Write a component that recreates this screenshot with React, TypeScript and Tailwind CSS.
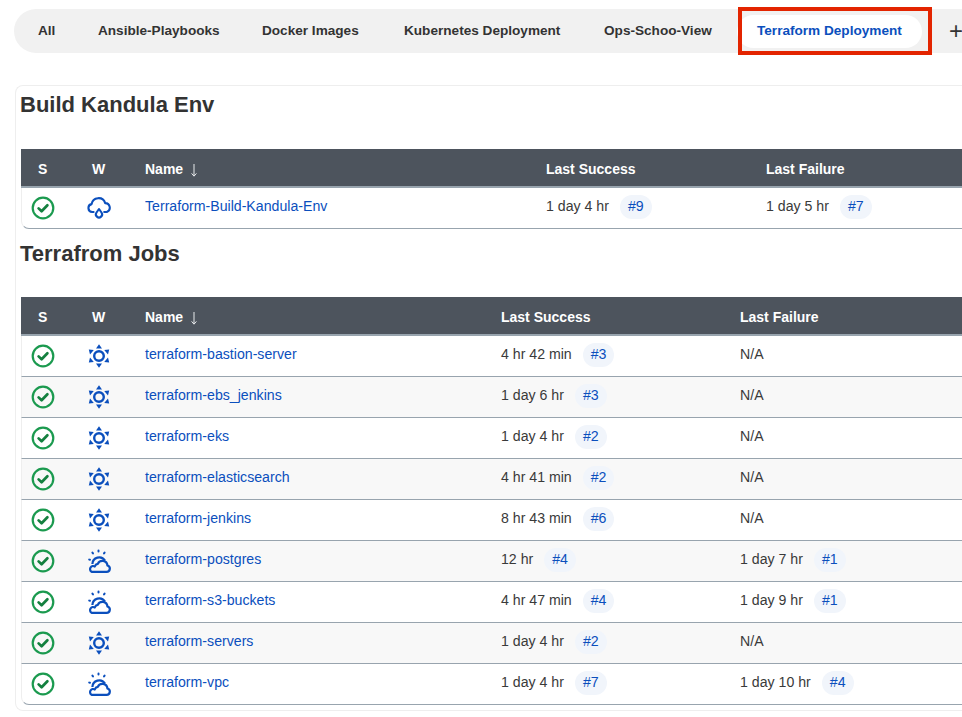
import React from "react";

const Check = () => (
  <svg width="24" height="24" viewBox="0 0 24 24" fill="none" className="block">
    <circle cx="12" cy="12" r="10.3" stroke="#1b9a4f" strokeWidth="2.2" />
    <path d="M7.6 12.4l3 2.9 5.8-6" stroke="#14803f" strokeWidth="2.7" strokeLinecap="round" strokeLinejoin="round" />
  </svg>
);

const Sun = () => (
  <svg width="24" height="24" viewBox="0 0 24 24" className="block">
    <circle cx="12" cy="12" r="4.8" fill="none" stroke="#0b4fbd" strokeWidth="2.4" />
    <path
      d="M12 .2l3 4.2H9zM12 23.8l-3-4.2h6zM1.8 5.6l5 .4-3.8 4.4zM22.2 5.6l-1.2 4.8-3.8-4.4zM1.8 18.4l1.2-4.8 3.8 4.4zM22.2 18.4l-5-.4 3.8-4.4z"
      fill="#0b4fbd"
    />
  </svg>
);

const Cloudy = () => (
  <svg width="24" height="24" viewBox="0 0 24 24" fill="none" className="block">
    <path d="M5.4 15a6.8 6.8 0 0 1 12.6-3.4" stroke="#0b4fbd" strokeWidth="2.2" />
    <path
      d="M4.6 22.8h15a3.2 3.2 0 0 0 .8-6.3 5 5 0 0 0-9.6-1.6 3.8 3.8 0 0 0-3 2.6 3 3 0 0 0-3.2 5.3z"
      stroke="#0b4fbd"
      strokeWidth="2.2"
      strokeLinejoin="round"
    />
    <path d="M11.5 1.6v.8M5.4 3.6l.6.8M17.6 3.6l-.6.8M2.2 10.6l.8.2" stroke="#0b4fbd" strokeWidth="2" strokeLinecap="round" />
  </svg>
);

const Rain = () => (
  <svg width="24" height="24" viewBox="0 0 24 24" fill="none" className="block">
    <path
      d="M6.6 16H5.2a4 4 0 0 1-.6-7.9 7 7 0 0 1 13.6-1 4.6 4.6 0 0 1 1.6 8.9h-2.6"
      stroke="#0b4fbd"
      strokeWidth="2.1"
      strokeLinecap="round"
      strokeLinejoin="round"
    />
    <path d="M12 13l2.5 3.5a3.1 3.1 0 1 1-5 0z" stroke="#0b4fbd" strokeWidth="2.1" strokeLinejoin="round" />
  </svg>
);

const SortArrow = () => (
  <svg width="8" height="13" viewBox="0 0 8 13" fill="none" className="ml-[7px] mt-[3px]">
    <path d="M4 0v12M1.6 9.4L4 12.2l2.4-2.8" stroke="#e8eaec" strokeWidth="1" />
  </svg>
);

const tabs = [
  { name: "All", w: "w-[57px]" },
  { name: "Ansible-Playbooks", w: "w-[161px]" },
  { name: "Docker Images", w: "w-[139px]" },
  { name: "Kubernetes Deployment", w: "w-[197px]" },
  { name: "Ops-Schoo-View", w: "w-[150px]" },
];

const jobs = [
  { name: "terraform-bastion-server", icon: "sun", ok: "4 hr 42 min", okNo: "#3" },
  { name: "terraform-ebs_jenkins", icon: "sun", ok: "1 day 6 hr", okNo: "#3" },
  { name: "terraform-eks", icon: "sun", ok: "1 day 4 hr", okNo: "#2" },
  { name: "terraform-elasticsearch", icon: "sun", ok: "4 hr 41 min", okNo: "#2" },
  { name: "terraform-jenkins", icon: "sun", ok: "8 hr 43 min", okNo: "#6" },
  { name: "terraform-postgres", icon: "cloud", ok: "12 hr", okNo: "#4", fail: "1 day 7 hr", failNo: "#1" },
  { name: "terraform-s3-buckets", icon: "cloud", ok: "4 hr 47 min", okNo: "#4", fail: "1 day 9 hr", failNo: "#1" },
  { name: "terraform-servers", icon: "sun", ok: "1 day 4 hr", okNo: "#2" },
  { name: "terraform-vpc", icon: "cloud", ok: "1 day 4 hr", okNo: "#7", fail: "1 day 10 hr", failNo: "#4" },
];

const RunCell = ({ time, no }: { time?: string; no?: string }) => (
  <div className="flex items-center gap-[11px] pb-[2px]">
    <span>{time ?? "N/A"}</span>
    {no && (
      <span className="flex h-6 items-center rounded-full bg-[#f1f5fb] px-2 text-[#0b4fbd]">{no}</span>
    )}
  </div>
);

const Header = ({ nameW, okW }: { nameW: string; okW: string }) => (
  <div className="flex h-[39px] items-center border-b-2 border-[#98a4ae] bg-[#4d545d] pt-[2px] text-sm font-bold text-white">
    <div className="w-[44px] pl-[17px]">S</div>
    <div className="w-[80px] pl-[27px]">W</div>
    <div className={`${nameW} flex items-center`}>
      Name
      <SortArrow />
    </div>
    <div className={okW}>Last Success</div>
    <div>Last Failure</div>
  </div>
);

export default function App() {
  return (
    <div className="h-[717px] w-[962px] overflow-hidden bg-white font-['Liberation_Sans',sans-serif] text-[14.15px] text-[#3a3a3a]">
      <div className="ml-[14px] mt-[9px] flex h-[44px] w-[960px] items-center gap-[3px] rounded-l-[22px] bg-[#f1f1f1] pl-1 text-[13.6px] font-bold text-[#333]">
        {tabs.map((t) => (
          <div key={t.name} className={`${t.w} shrink-0 pl-5 pt-[1px] whitespace-nowrap`}>
            {t.name}
          </div>
        ))}
        <div className="relative flex h-[33px] w-[185px] shrink-0 items-center rounded-full bg-white pl-5 pt-[1px] whitespace-nowrap text-[#0b4fbd]">
          Terraform Deployment
          <div className="absolute -top-2 bottom-[-7px] left-[1px] right-[-10px] border-[4px] border-[#e32400]" />
        </div>
        <div className="ml-[24px] text-[24px] font-normal leading-none">+</div>
      </div>

      <div className="ml-[15px] mt-[32px] h-[626px] rounded-l-lg border border-r-0 border-[#eeeeee] pl-[4px]">
        <h2 className="pt-[4px] text-[22px] font-bold leading-[30px] text-[#333]">Build Kandula Env</h2>
        <div className="ml-[1px] mt-[29px]">
          <Header nameW="w-[401px]" okW="w-[220px]" />
          <div className="flex h-[41px] items-center rounded-bl-lg border-b border-l border-b-[#98a4ae] border-l-[#eeeeee]">
            <div className="w-[43px] pl-[9px]">
              <Check />
            </div>
            <div className="w-[80px] pl-[22px]">
              <Rain />
            </div>
            <div className="w-[401px] pb-[2px] text-[#0b4fbd]">Terraform-Build-Kandula-Env</div>
            <div className="w-[220px]">
              <RunCell time="1 day 4 hr" no="#9" />
            </div>
            <RunCell time="1 day 5 hr" no="#7" />
          </div>
        </div>

        <h2 className="mt-[10px] text-[22px] font-bold leading-[30px] text-[#333]">Terrafrom Jobs</h2>
        <div className="ml-[1px] mt-[28px]">
          <Header nameW="w-[356px]" okW="w-[239px]" />
          {jobs.map((j, i) => (
            <div
              key={j.name}
              className={`flex h-[41px] items-center border-b border-l border-b-[#98a4ae] border-l-[#eeeeee] ${i % 2 === 1 ? "bg-[#f8f8f8]" : "bg-white"} ${i === jobs.length - 1 ? "rounded-bl-lg" : ""}`}
            >
              <div className="w-[43px] pl-[9px]">
                <Check />
              </div>
              <div className="w-[80px] pl-[22px]">{j.icon === "sun" ? <Sun /> : <Cloudy />}</div>
              <div className="w-[356px] pb-[2px] text-[#0b4fbd]">{j.name}</div>
              <div className="w-[239px]">
                <RunCell time={j.ok} no={j.okNo} />
              </div>
              <RunCell time={j.fail} no={j.failNo} />
            </div>
          ))}
        </div>
      </div>
    </div>
  );
}
